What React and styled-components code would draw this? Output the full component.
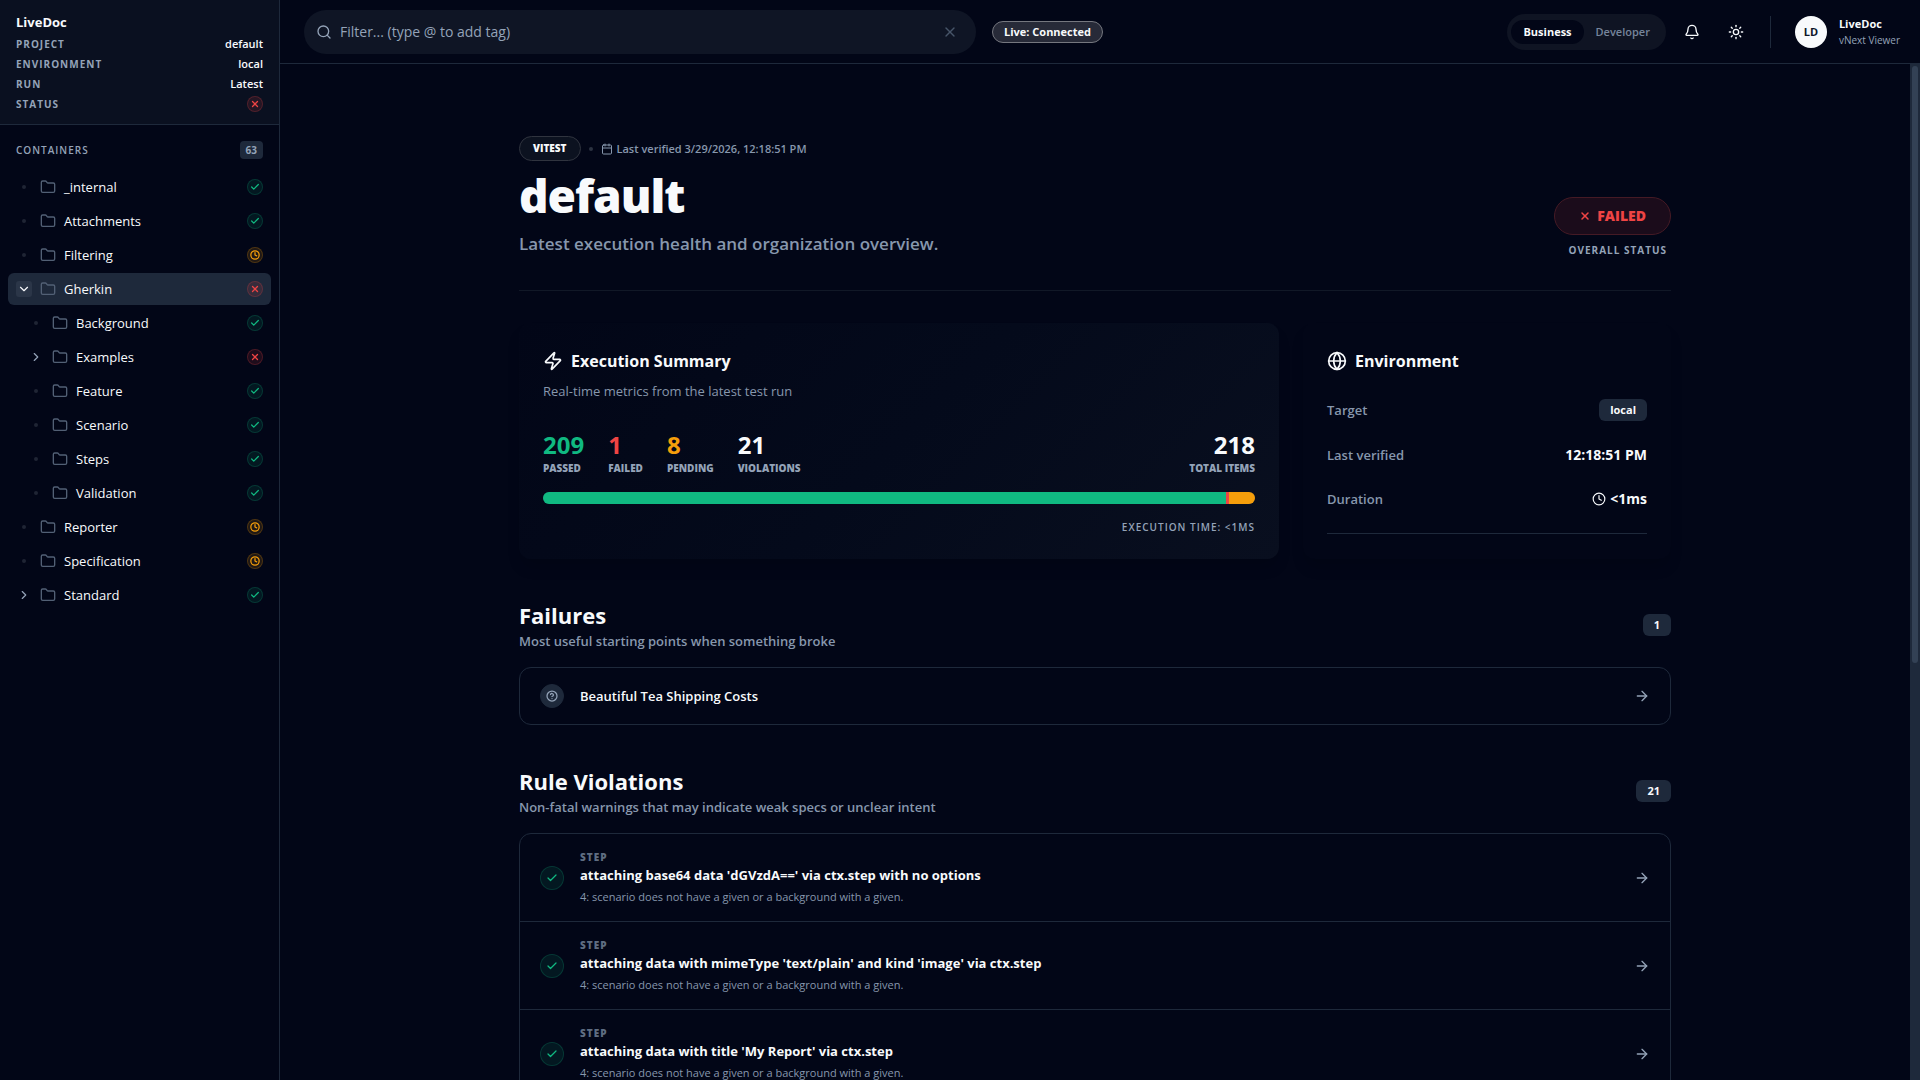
import React, { useState } from 'react';
import styled, { createGlobalStyle, css } from 'styled-components';
import {
  Search, X, Bell, Sun, Folder, Check, Clock, ChevronDown, ChevronRight,
  Calendar, Zap, Globe, ArrowRight, CircleQuestionMark,
} from 'lucide-react';

const c = {
  bg: '#020617',
  panel: '#0a1020',
  muted: '#1e293b',
  line: '#1e293b',
  text: '#f8fafc',
  dim: '#94a3b8',
  note: '#8797ad',
  green: '#10b981',
  red: '#ef4444',
  amber: '#f59e0b',
};

const Global = createGlobalStyle`
  *, *::before, *::after { box-sizing: border-box; }
  html, body, #root { height: 100%; }
  body {
    margin: 0;
    background: ${c.bg};
    color: ${c.text};
    font-family: "Segoe UI", "Open Sans", "Noto Sans", sans-serif;
    font-size: 14px;
    line-height: 20px;
  }
  h1, h2, h3, p, ul, dl, dd { margin: 0; padding: 0; }
  ul { list-style: none; }
  button, input { font: inherit; color: inherit; background: none; border: 0; padding: 0; margin: 0; }
  button { cursor: pointer; }
  a { color: inherit; text-decoration: none; }
  svg { flex: none; display: block; }
`;

const Shell = styled.div`
  display: flex;
  height: 100vh;
  overflow: hidden;
`;

const Caption = styled.span`
  font-size: 10px;
  line-height: 15px;
  font-weight: ${(p) => p.$weight || 700};
  letter-spacing: ${(p) => (p.$wide ? '1px' : 'normal')};
  text-transform: uppercase;
  color: ${(p) => p.$color || c.dim};
`;

/* ---------- sidebar ---------- */

const Sidebar = styled.aside`
  flex: none;
  width: 280px;
  border-right: 1px solid ${c.line};
`;

const SideHeader = styled.div`
  display: flex;
  flex-direction: column;
  gap: 4px;
  padding: 12px 16px;
  background: ${c.panel};
  border-bottom: 1px solid ${c.line};
`;

const SideTitle = styled.div`
  font-weight: 700;
  font-size: 13px;
  line-height: 20px;
`;

const MetaRow = styled.div`
  display: flex;
  align-items: center;
  justify-content: space-between;
  height: 16px;
  font-size: 11px;
  font-weight: 600;
`;

const TreeHeader = styled.div`
  display: flex;
  align-items: center;
  justify-content: space-between;
  padding: 16px 16px 12px;
`;

const CountChip = styled.span`
  padding: 0 6px;
  border-radius: 4px;
  background: ${c.muted};
  color: ${c.dim};
  font-size: 10px;
  line-height: 18px;
  font-weight: 700;
`;

const Tree = styled.ul`
  display: flex;
  flex-direction: column;
  gap: 2px;
  padding: 0 8px;
`;

const TreeItem = styled.button`
  display: flex;
  align-items: center;
  gap: 8px;
  width: 100%;
  height: 32px;
  padding: 0 8px;
  padding-left: ${(p) => 8 + p.$depth * 12}px;
  border-radius: 6px;
  text-align: left;
  font-size: 13px;
  font-weight: 500;
  background: ${(p) => (p.$active ? c.muted : 'transparent')};
`;

const Toggle = styled.span`
  display: grid;
  place-items: center;
  width: 16px;
  height: 16px;
  border-radius: 3px;
  color: ${(p) => (p.$active ? c.text : c.dim)};
  background: ${(p) => (p.$active ? '#2b3648' : 'transparent')};
`;

const Dot = styled.span`
  width: 4px;
  height: 4px;
  border-radius: 50%;
  background: ${(p) => p.$color || '#1f2534'};
`;

const ItemLabel = styled.span`
  flex: 1;
`;

const tones = {
  pass: css`color: ${c.green}; background: rgba(16, 185, 129, 0.1); border-color: rgba(16, 185, 129, 0.2);`,
  fail: css`color: ${c.red}; background: rgba(239, 68, 68, 0.12); border-color: rgba(239, 68, 68, 0.22);`,
  wait: css`color: ${c.amber}; background: rgba(245, 158, 11, 0.12); border-color: rgba(245, 158, 11, 0.22);`,
  unknown: css`color: ${c.dim}; background: ${c.muted}; border-color: ${c.muted};`,
};

const StatusRing = styled.span`
  display: grid;
  place-items: center;
  flex: none;
  width: ${(p) => p.$size}px;
  height: ${(p) => p.$size}px;
  border: 1px solid;
  border-radius: 50%;
  ${(p) => tones[p.$tone]}
`;

const glyphs = { pass: Check, fail: X, wait: Clock, unknown: CircleQuestionMark };

function Status({ tone, size = 16 }) {
  const Glyph = glyphs[tone];
  return (
    <StatusRing $tone={tone} $size={size} role="img" aria-label={tone}>
      <Glyph size={size === 16 ? 10 : 12} strokeWidth={size === 16 ? 3 : 2.5} />
    </StatusRing>
  );
}

/* ---------- top bar ---------- */

const Body = styled.div`
  display: flex;
  flex: 1;
  flex-direction: column;
  min-width: 0;
`;

const TopBar = styled.header`
  display: flex;
  flex: none;
  align-items: center;
  gap: 16px;
  height: 64px;
  padding: 0 20px 0 24px;
  border-bottom: 1px solid ${c.line};
`;

const SearchBox = styled.label`
  display: flex;
  flex: 1;
  align-items: center;
  gap: 8px;
  max-width: 672px;
  height: 44px;
  padding: 0 18px 0 12px;
  border-radius: 22px;
  background: #0f1525;
  color: ${c.dim};
`;

const SearchInput = styled.input`
  flex: 1;
  min-width: 0;
  outline: none;
  font-size: 14px;
  line-height: 20px;
  color: ${c.text};
  &::placeholder { color: ${c.dim}; opacity: 1; }
`;

const ClearButton = styled.button`
  color: #475569;
`;

const LivePill = styled.span`
  padding: 0 11px;
  border: 1px solid #75777f;
  border-radius: 11px;
  background: #272a38;
  font-size: 11px;
  line-height: 20px;
  font-weight: 700;
`;

const TopRight = styled.div`
  display: flex;
  align-items: center;
  gap: 8px;
  margin-left: auto;
`;

const Segmented = styled.div`
  display: flex;
  align-items: center;
  height: 36px;
  padding: 0 4px;
  border-radius: 18px;
  background: #0f1423;
`;

const Segment = styled.button`
  height: 24px;
  padding: 0 12px;
  border-radius: 12px;
  font-size: 11px;
  font-weight: ${(p) => (p.$on ? 700 : 600)};
  color: ${(p) => (p.$on ? c.text : '#76859b')};
  background: ${(p) => (p.$on ? c.bg : 'transparent')};
`;

const IconButton = styled.button`
  display: grid;
  place-items: center;
  width: 36px;
  height: 36px;
  border-radius: 50%;
`;

const Profile = styled.div`
  display: flex;
  align-items: center;
  gap: 12px;
  height: 32px;
  margin-left: 8px;
  padding-left: 24px;
  border-left: 1px solid ${c.line};
`;

const Avatar = styled.span`
  display: grid;
  place-items: center;
  width: 32px;
  height: 32px;
  border-radius: 50%;
  background: ${c.text};
  color: #0f172a;
  font-size: 11px;
  font-weight: 700;
`;

const ProfileText = styled.div`
  display: flex;
  flex-direction: column;
  font-size: 11px;
  line-height: 16px;
  font-weight: 700;
`;

const ProfileSub = styled.span`
  font-size: 10px;
  font-weight: 400;
  color: ${c.dim};
`;

/* ---------- content ---------- */

const Viewport = styled.div`
  display: flex;
  flex: 1;
  min-height: 0;
`;

const Scroller = styled.main`
  flex: 1;
  min-width: 0;
  overflow-y: auto;
  scrollbar-width: none;
`;

const ScrollTrack = styled.div`
  flex: none;
  width: 10px;
  padding: 2px;
  background: ${c.muted};
`;

const ScrollThumb = styled.div`
  height: 59%;
  border-radius: 3px;
  background: #334155;
`;

const Page = styled.div`
  display: flex;
  flex-direction: column;
  max-width: 1152px;
  margin: 0 auto;
  padding: 72px 0;
`;

const Hero = styled.section`
  display: flex;
  align-items: flex-end;
  justify-content: space-between;
  padding-bottom: 32px;
  margin-bottom: 32px;
  border-bottom: 1px solid #111827;
`;

const HeroMeta = styled.div`
  display: flex;
  align-items: center;
  gap: 8px;
  margin-bottom: 8px;
`;

const Framework = styled.span`
  padding: 0 13px;
  border: 1px solid #30343f;
  border-radius: 13px;
  background: #0c1220;
  font-size: 10px;
  line-height: 23px;
  font-weight: 800;
`;

const Verified = styled.span`
  display: flex;
  align-items: center;
  gap: 4px;
  font-size: 11px;
  line-height: 16px;
  font-weight: 600;
  color: ${c.note};
`;

const Title = styled.h1`
  font-size: 46px;
  line-height: 52px;
  font-weight: 800;
  letter-spacing: -1px;
`;

const Lead = styled.p`
  margin-top: 8px;
  font-size: 17px;
  line-height: 29px;
  font-weight: 600;
  color: ${c.note};
`;

const Outcome = styled.div`
  display: flex;
  flex-direction: column;
  align-items: flex-end;
  gap: 8px;
`;

const OutcomePill = styled.span`
  display: flex;
  align-items: center;
  gap: 6px;
  height: 38px;
  padding: 0 24px;
  border: 1px solid #451a25;
  border-radius: 19px;
  background: #1b0c1b;
  color: ${c.red};
  font-weight: 800;
`;

const OutcomeLabel = styled(Caption)`
  padding-right: 4px;
`;

const Cards = styled.div`
  display: grid;
  grid-template-columns: repeat(3, minmax(0, 1fr));
  gap: 24px;
`;

const Card = styled.section`
  padding: 24px;
  border-radius: 12px;
  box-shadow: 0 10px 15px -3px rgba(0, 0, 0, 0.15);
`;

const SummaryCard = styled(Card)`
  grid-column: span 2;
  background: linear-gradient(135deg, #020617 0%, #040a1b 50%, #090f1f 100%);
`;

const CardTitle = styled.h3`
  display: flex;
  align-items: center;
  gap: 8px;
  font-size: 16px;
  line-height: 28px;
  font-weight: 700;
`;

const CardNote = styled.p`
  margin-top: 6px;
  font-size: 13px;
  line-height: 20px;
  color: ${c.note};
`;

const Stats = styled.div`
  display: flex;
  gap: 24px;
  margin-top: 28px;
`;

const Stat = styled.div`
  display: flex;
  flex-direction: column;
  ${(p) => p.$end && css`margin-left: auto; align-items: flex-end;`}
`;

const StatValue = styled.span`
  font-size: 24px;
  line-height: 32px;
  font-weight: 700;
  color: ${(p) => p.$color || c.text};
`;

const Bar = styled.div`
  display: flex;
  height: 12px;
  margin: 16px 0;
  border-radius: 6px;
  overflow: hidden;
  background: ${c.muted};
`;

const Slice = styled.div`
  background: ${(p) => p.$color};
`;

const RunTime = styled.div`
  display: flex;
  justify-content: flex-end;
`;

const EnvList = styled.dl`
  display: flex;
  flex-direction: column;
  gap: 24px;
  margin-top: 24px;
  padding-bottom: 24px;
  border-bottom: 1px solid ${c.line};
`;

const EnvRow = styled.div`
  display: flex;
  align-items: center;
  justify-content: space-between;
  line-height: 20px;
`;

const EnvKey = styled.dt`
  font-size: 13px;
  font-weight: 600;
  color: ${c.note};
`;

const EnvValue = styled.dd`
  display: flex;
  align-items: center;
  gap: 4px;
  font-size: 14px;
  font-weight: 700;
`;

const Chip = styled.span`
  padding: 0 11px;
  border-radius: 6px;
  background: ${c.muted};
  font-size: 11px;
  line-height: 22px;
  font-weight: 700;
`;

const Section = styled.section`
  margin-top: 40px;
`;

const SectionHead = styled.div`
  display: flex;
  align-items: center;
  justify-content: space-between;
  margin-bottom: 16px;
`;

const SectionTitle = styled.h2`
  font-size: 22px;
  line-height: 32px;
  font-weight: 700;
`;

const SectionNote = styled.p`
  font-size: 13px;
  line-height: 20px;
  font-weight: 600;
  color: ${c.note};
`;

const List = styled.ul`
  border: 1px solid ${c.line};
  border-radius: 12px;
  overflow: hidden;
`;

const ListItem = styled.li`
  & + & { border-top: 1px solid ${c.line}; }
`;

const ListLink = styled.a`
  display: flex;
  align-items: center;
  gap: 16px;
  padding: 16px 20px;
  & > svg { color: ${c.dim}; }
`;

const ListText = styled.div`
  display: flex;
  flex: 1;
  flex-direction: column;
  min-width: 0;
`;

const ListTitle = styled.span`
  font-size: 13px;
  line-height: 20px;
  font-weight: ${(p) => p.$weight || 700};
`;

const ListNote = styled.span`
  margin-top: 4px;
  font-size: 11px;
  line-height: 16px;
  color: ${c.note};
`;

const tree = [
  { name: '_internal', tone: 'pass' },
  { name: 'Attachments', tone: 'pass' },
  { name: 'Filtering', tone: 'wait' },
  { name: 'Gherkin', tone: 'fail', open: true },
  { name: 'Background', tone: 'pass', depth: 1 },
  { name: 'Examples', tone: 'fail', depth: 1, closed: true },
  { name: 'Feature', tone: 'pass', depth: 1 },
  { name: 'Scenario', tone: 'pass', depth: 1 },
  { name: 'Steps', tone: 'pass', depth: 1 },
  { name: 'Validation', tone: 'pass', depth: 1 },
  { name: 'Reporter', tone: 'wait' },
  { name: 'Specification', tone: 'wait' },
  { name: 'Standard', tone: 'pass', closed: true },
];

const stats = [
  { label: 'Passed', value: 209, color: c.green },
  { label: 'Failed', value: 1, color: c.red },
  { label: 'Pending', value: 8, color: c.amber },
];
const total = stats.reduce((sum, s) => sum + s.value, 0);

const violations = [
  "attaching base64 data 'dGVzdA==' via ctx.step with no options",
  "attaching data with mimeType 'text/plain' and kind 'image' via ctx.step",
  "attaching data with title 'My Report' via ctx.step",
];

function SectionHeader({ title, note, count }) {
  return (
    <SectionHead>
      <div>
        <SectionTitle>{title}</SectionTitle>
        <SectionNote>{note}</SectionNote>
      </div>
      <Chip>{count}</Chip>
    </SectionHead>
  );
}

export default function App() {
  const [query, setQuery] = useState('');
  const [mode, setMode] = useState('Business');

  return (
    <Shell>
      <Global />
      <Sidebar>
        <SideHeader>
          <SideTitle>LiveDoc</SideTitle>
          <MetaRow><Caption $wide>Project</Caption>default</MetaRow>
          <MetaRow><Caption $wide>Environment</Caption>local</MetaRow>
          <MetaRow><Caption $wide>Run</Caption>Latest</MetaRow>
          <MetaRow><Caption $wide>Status</Caption><Status tone="fail" /></MetaRow>
        </SideHeader>
        <TreeHeader>
          <Caption $wide $weight={600}>Containers</Caption>
          <CountChip>63</CountChip>
        </TreeHeader>
        <Tree>
          {tree.map((n) => (
            <li key={n.name}>
              <TreeItem type="button" $depth={n.depth || 0} $active={n.open}>
                <Toggle $active={n.open}>
                  {n.open && <ChevronDown size={14} />}
                  {n.closed && <ChevronRight size={14} />}
                  {!n.open && !n.closed && <Dot />}
                </Toggle>
                <Folder size={16} color="#526075" />
                <ItemLabel>{n.name}</ItemLabel>
                <Status tone={n.tone} />
              </TreeItem>
            </li>
          ))}
        </Tree>
      </Sidebar>

      <Body>
        <TopBar>
          <SearchBox>
            <Search size={16} />
            <SearchInput
              type="text"
              aria-label="Filter"
              placeholder="Filter... (type @ to add tag)"
              value={query}
              onChange={(e) => setQuery(e.target.value)}
            />
            <ClearButton type="button" aria-label="Clear filter" onClick={() => setQuery('')}>
              <X size={16} />
            </ClearButton>
          </SearchBox>
          <LivePill>Live: Connected</LivePill>
          <TopRight>
            <Segmented>
              {['Business', 'Developer'].map((m) => (
                <Segment key={m} type="button" $on={mode === m} aria-pressed={mode === m} onClick={() => setMode(m)}>
                  {m}
                </Segment>
              ))}
            </Segmented>
            <IconButton type="button" aria-label="Notifications"><Bell size={16} /></IconButton>
            <IconButton type="button" aria-label="Toggle theme"><Sun size={16} /></IconButton>
            <Profile>
              <Avatar>LD</Avatar>
              <ProfileText>
                LiveDoc
                <ProfileSub>vNext Viewer</ProfileSub>
              </ProfileText>
            </Profile>
          </TopRight>
        </TopBar>

        <Viewport>
          <Scroller>
            <Page>
              <Hero>
                <div>
                  <HeroMeta>
                    <Framework>VITEST</Framework>
                    <Dot $color="#2c3341" />
                    <Verified><Calendar size={12} />Last verified 3/29/2026, 12:18:51 PM</Verified>
                  </HeroMeta>
                  <Title>default</Title>
                  <Lead>Latest execution health and organization overview.</Lead>
                </div>
                <Outcome>
                  <OutcomePill><X size={12} strokeWidth={3} />FAILED</OutcomePill>
                  <OutcomeLabel $wide>Overall Status</OutcomeLabel>
                </Outcome>
              </Hero>

              <Cards>
                <SummaryCard>
                  <CardTitle><Zap size={20} />Execution Summary</CardTitle>
                  <CardNote>Real-time metrics from the latest test run</CardNote>
                  <Stats>
                    {stats.map((s) => (
                      <Stat key={s.label}>
                        <StatValue $color={s.color}>{s.value}</StatValue>
                        <Caption $weight={800}>{s.label}</Caption>
                      </Stat>
                    ))}
                    <Stat><StatValue>21</StatValue><Caption $weight={800}>Violations</Caption></Stat>
                    <Stat $end><StatValue>{total}</StatValue><Caption $weight={800}>Total Items</Caption></Stat>
                  </Stats>
                  <Bar>
                    {stats.map((s) => (
                      <Slice key={s.label} $color={s.color} style={{ width: `${(s.value / total) * 100}%` }} />
                    ))}
                  </Bar>
                  <RunTime><Caption $wide $weight={600}>Execution time: &lt;1ms</Caption></RunTime>
                </SummaryCard>

                <Card>
                  <CardTitle><Globe size={20} />Environment</CardTitle>
                  <EnvList>
                    <EnvRow><EnvKey>Target</EnvKey><EnvValue><Chip>local</Chip></EnvValue></EnvRow>
                    <EnvRow><EnvKey>Last verified</EnvKey><EnvValue>12:18:51 PM</EnvValue></EnvRow>
                    <EnvRow><EnvKey>Duration</EnvKey><EnvValue><Clock size={14} />&lt;1ms</EnvValue></EnvRow>
                  </EnvList>
                </Card>
              </Cards>

              <Section>
                <SectionHeader title="Failures" note="Most useful starting points when something broke" count={1} />
                <List>
                  <ListItem>
                    <ListLink href="#beautiful-tea">
                      <Status tone="unknown" size={24} />
                      <ListText><ListTitle $weight={600}>Beautiful Tea Shipping Costs</ListTitle></ListText>
                      <ArrowRight size={16} />
                    </ListLink>
                  </ListItem>
                </List>
              </Section>

              <Section>
                <SectionHeader title="Rule Violations" note="Non-fatal warnings that may indicate weak specs or unclear intent" count={21} />
                <List>
                  {violations.map((v, i) => (
                    <ListItem key={v}>
                      <ListLink href={`#violation-${i + 1}`}>
                        <Status tone="pass" size={24} />
                        <ListText>
                          <Caption $wide $weight={800} $color="#5f6d82">Step</Caption>
                          <ListTitle>{v}</ListTitle>
                          <ListNote>4: scenario does not have a given or a background with a given.</ListNote>
                        </ListText>
                        <ArrowRight size={16} />
                      </ListLink>
                    </ListItem>
                  ))}
                </List>
              </Section>
            </Page>
          </Scroller>
          <ScrollTrack><ScrollThumb /></ScrollTrack>
        </Viewport>
      </Body>
    </Shell>
  );
}
